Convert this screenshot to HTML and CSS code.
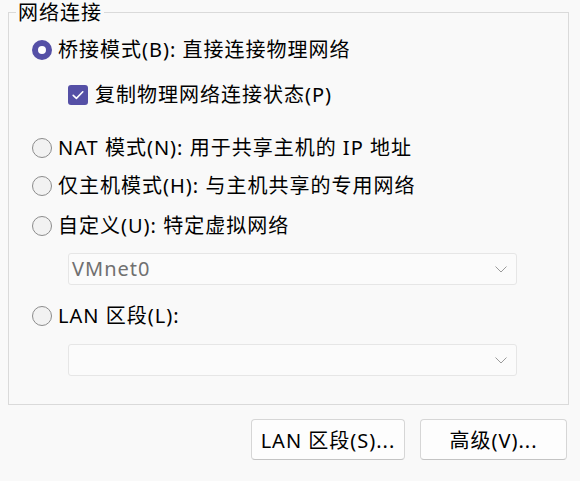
FILE: index.html
```html
<!DOCTYPE html>
<html lang="zh-CN">
<head>
<meta charset="utf-8">
<link rel="stylesheet" href="styles.css">
</head>
<body>
<fieldset class="group">
  <legend class="legend">网络连接</legend>
  <div class="row r1"><span class="radio checked"></span><span class="label">桥接模式(B): 直接连接物理网络</span></div>
  <div class="row r2 sub"><span class="check"><svg width="20" height="20" viewBox="0 0 20 20"><path d="M5.2 10.4 L8.4 13.4 L14.8 6.8" fill="none" stroke="#fff" stroke-width="1.6" stroke-linecap="round" stroke-linejoin="round"/></svg></span><span class="label">复制物理网络连接状态(P)</span></div>
  <div class="row r3"><span class="radio"></span><span class="label">NAT 模式(N): 用于共享主机的 IP 地址</span></div>
  <div class="row r4"><span class="radio"></span><span class="label">仅主机模式(H): 与主机共享的专用网络</span></div>
  <div class="row r5"><span class="radio"></span><span class="label">自定义(U): 特定虚拟网络</span></div>
  <div class="combo c1"><span class="combo-text">VMnet0</span><svg class="chev" width="12" height="7" viewBox="0 0 12 7"><path d="M0.5 0.5 L6 6 L11.5 0.5" fill="none" stroke="#9a9a9a" stroke-width="1"/></svg></div>
  <div class="row r6"><span class="radio"></span><span class="label">LAN 区段(L):</span></div>
  <div class="combo c2"><span class="combo-text"></span><svg class="chev" width="12" height="7" viewBox="0 0 12 7"><path d="M0.5 0.5 L6 6 L11.5 0.5" fill="none" stroke="#9a9a9a" stroke-width="1"/></svg></div>
</fieldset>
<div class="buttons">
  <button class="btn b1">LAN 区段(S)...</button>
  <button class="btn b2">高级(V)...</button>
</div>
</body>
</html>
```

FILE: styles.css
```css
html, body {
  margin: 0;
  padding: 0;
  background: #f9f9f9;
}
body {
  width: 580px;
  height: 481px;
  overflow: hidden;
  font-family: "Noto Sans", "Noto Sans CJK SC", sans-serif;
  font-size: 20px;
  letter-spacing: 1px;
  color: #000;
}
.group {
  box-sizing: border-box;
  width: 561px;
  margin: 0 0 0 8px;
  padding: 10px 0 28px 23px;
  border: 1px solid #dadada;
  display: flex;
  flex-direction: column;
  min-width: 0;
}
.legend {
  margin-left: -16px;
  padding: 0 2px;
  line-height: 25px;
  height: 25px;
}
.row {
  display: flex;
  align-items: center;
  height: 30px;
  line-height: 30px;
  white-space: nowrap;
}
.r2 { margin-top: 15px; padding-left: 36px; }
.r3 { margin-top: 23px; }
.r4 { margin-top: 8px; }
.r5 { margin-top: 10px; }
.c1 { margin-top: 12px; }
.r6 { margin-top: 16px; }
.c2 { margin-top: 13px; }

.radio {
  box-sizing: border-box;
  width: 20px;
  height: 20px;
  border-radius: 50%;
  border: 1px solid #8c8c8c;
  background: #f2f2f2;
  margin-right: 6px;
  flex: none;
}
.radio.checked {
  border: 6px solid #5550a6;
  background: #fff;
}
.check {
  width: 20px;
  height: 20px;
  border-radius: 3px;
  background: #5550a6;
  margin-right: 7px;
  flex: none;
  display: flex;
}
.combo {
  box-sizing: border-box;
  margin-left: 36px;
  width: 449px;
  height: 32px;
  border: 1px solid #e6e6e6;
  border-radius: 3px;
  background: #fbfbfb;
  display: flex;
  align-items: center;
  justify-content: space-between;
  padding: 0 9px 0 3px;
}
.combo-text {
  color: #707070;
  line-height: 30px;
}
.buttons {
  display: flex;
  justify-content: flex-end;
  gap: 15px;
  padding-right: 13px;
  margin-top: 14px;
}
.btn {
  box-sizing: border-box;
  height: 41px;
  border: 1px solid #d6d6d6;
  border-bottom-color: #c4c4c4;
  border-radius: 4px;
  background: #fdfdfd;
  font-family: inherit;
  font-size: 20px;
  letter-spacing: 1px;
  color: #000;
  padding: 0;
}
.b1 { width: 154px; }
.b2 { width: 147px; }
```
